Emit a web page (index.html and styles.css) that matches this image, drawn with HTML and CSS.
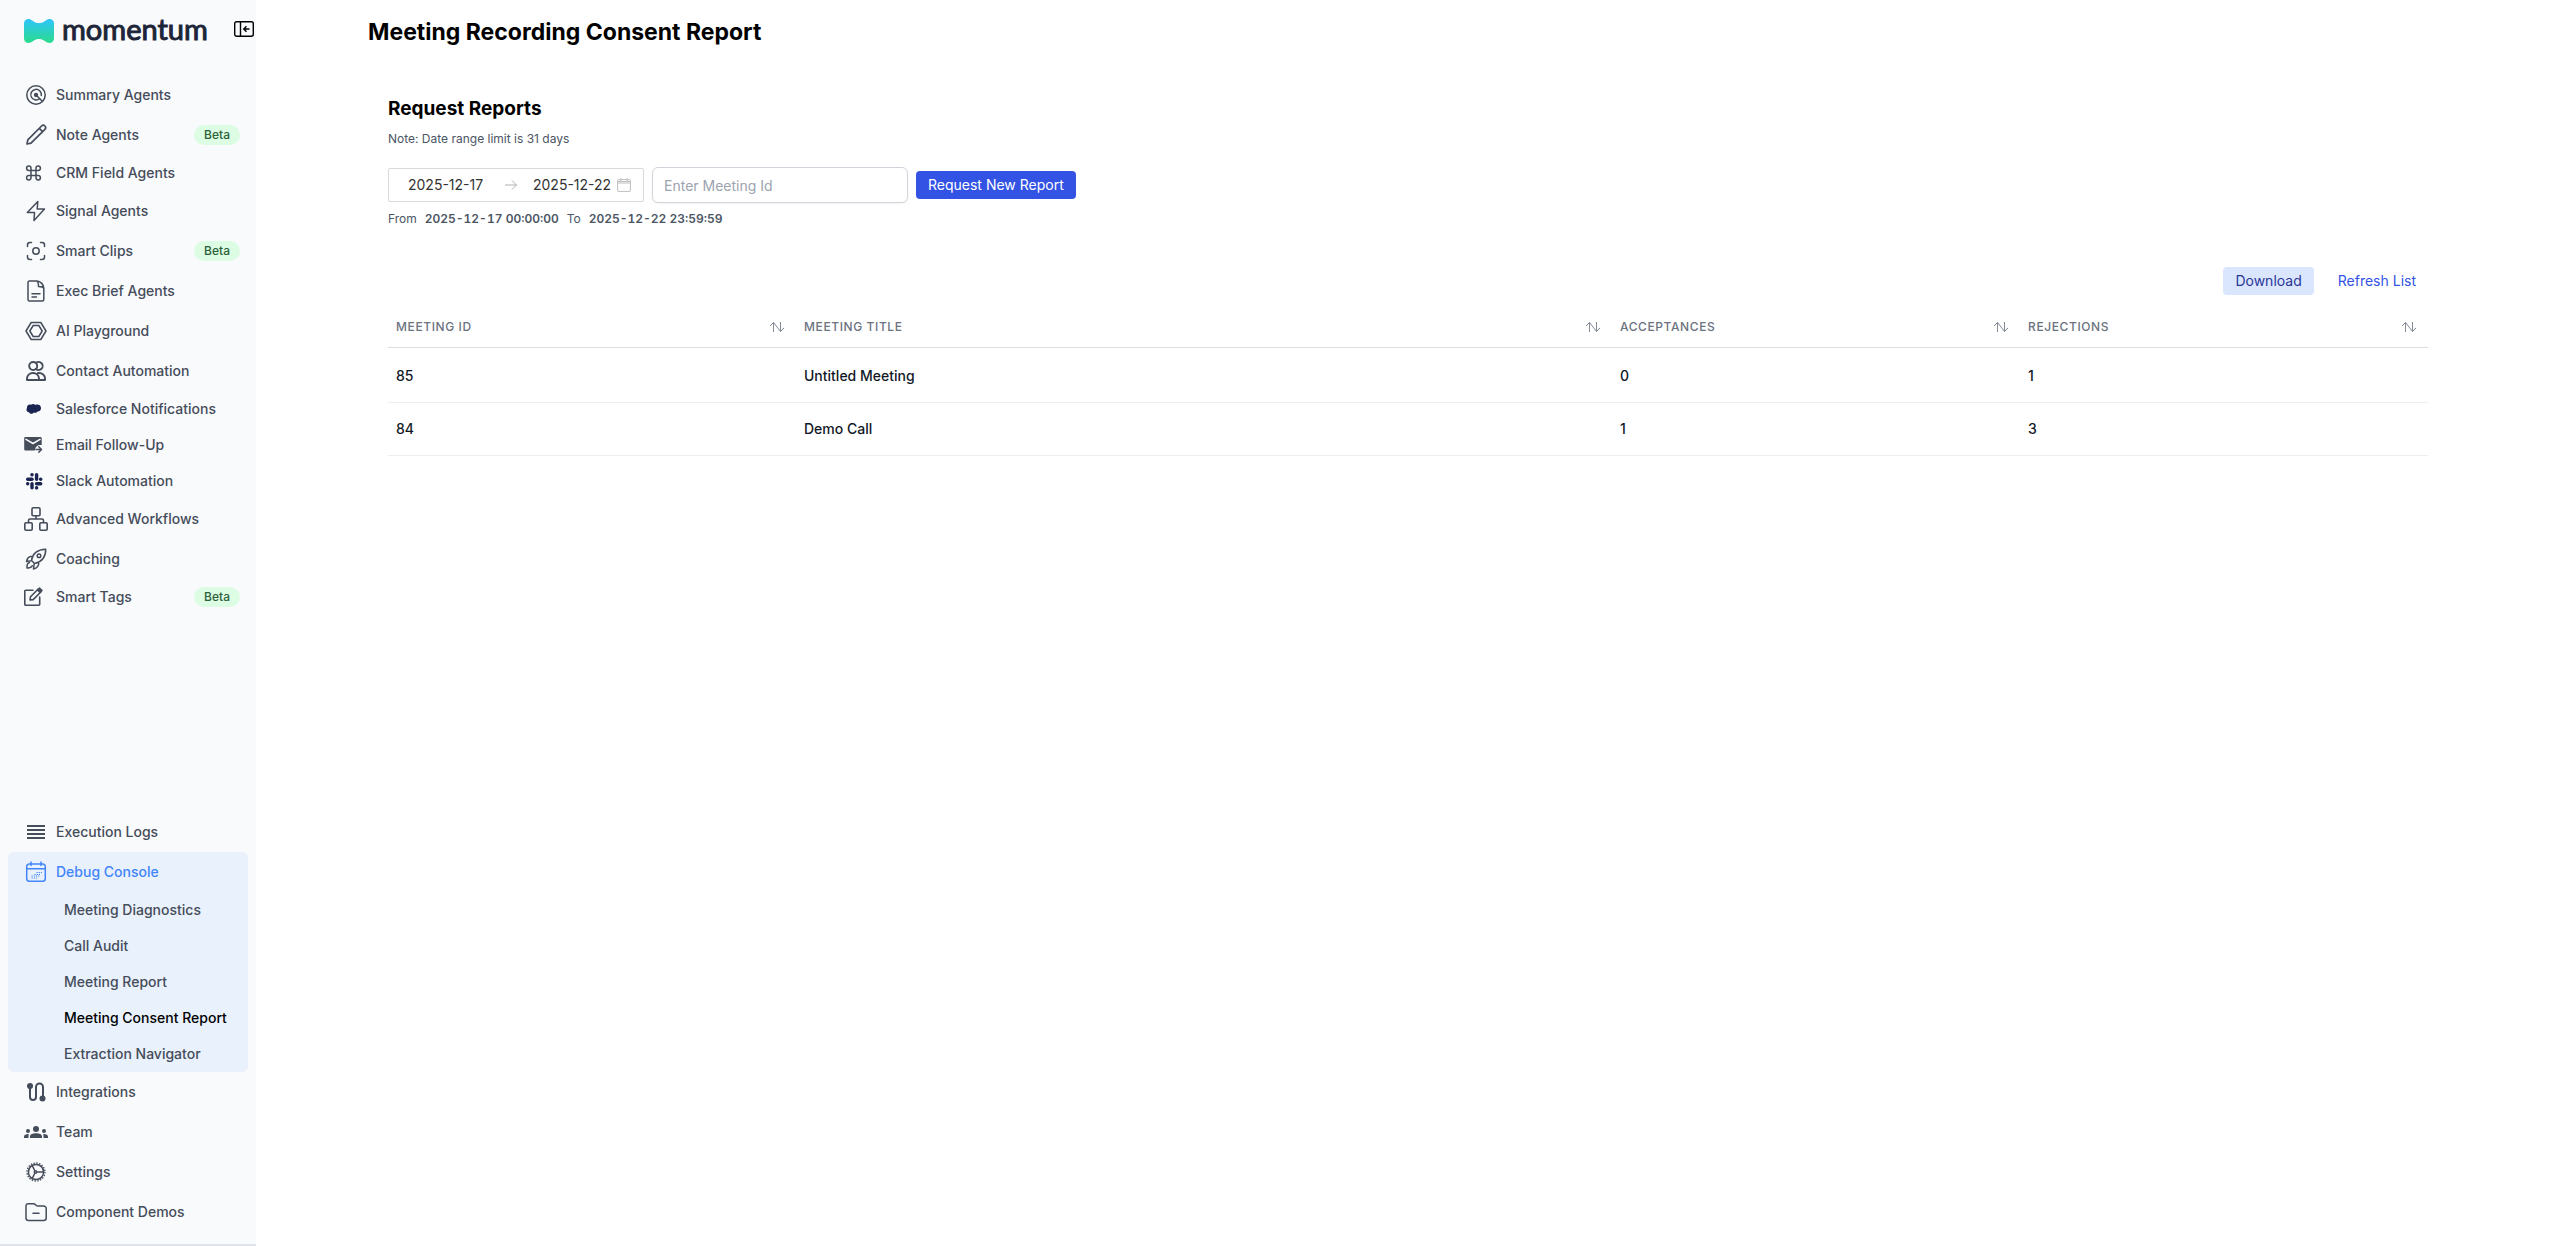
FILE: index.html
```html
<!DOCTYPE html>
<html lang="en">
<head>
	<meta charset="UTF-8">
	<title>Meeting Recording Consent Report</title>
	<link rel="stylesheet" href="styles.css">
</head>
<body>
	<div class="layout">
		<aside class="sidebar">
			<div class="sidebar-header">
				<a href="#" class="logo">
					<svg class="logo-mark" viewBox="0 0 30 24">
						<defs>
							<linearGradient id="logoFill" x1="0" y1="0" x2="0" y2="1">
								<stop offset="0" stop-color="#2ec5fb"/>
								<stop offset="1" stop-color="#2bdc8c"/>
							</linearGradient>
						</defs>
						<path fill="url(#logoFill)" d="M0 4.500C0 1 3.200-.8 6.500.4C9 1.300 10.500 4 15 4S21 1.300 23.500.4C26.800-.8 30 1 30 4.500V19.500C30 23 26.800 24.800 23.500 23.600C21 22.700 19.500 20 15 20S9 22.700 6.500 23.600C3.200 24.800 0 23 0 19.500Z"/>
					</svg>
					<span class="logo-text">momentum</span>
				</a>
				<button type="button" class="collapse-btn" aria-label="Collapse sidebar">
					<svg viewBox="0 0 20 16" fill="none" stroke="#000" stroke-width="1.4">
						<rect x=".7" y=".7" width="18.600" height="14.600" rx="2"/>
						<path d="M6.500 1v14M15.500 8H10M12.500 5.200L9.700 8l2.800 2.800"/>
					</svg>
				</button>
			</div>

			<nav class="nav">
				<a href="#" class="nav-link">
					<svg class="icon" viewBox="0 0 24 24"><circle cx="12" cy="12" r="9.200"/><path d="M15.500 15.700A5.300 5.300 0 1 1 17.300 12.500"/><circle cx="12" cy="12" r="1.400" class="solid"/><path d="M12 12l6.300 6.300" /></svg>
					Summary Agents
				</a>
				<a href="#" class="nav-link">
					<svg class="icon" viewBox="0 0 24 24"><path d="M3 21l.8-4.200L17.600 3a2.300 2.300 0 0 1 3.300 3.300L7 20.200zM15.300 5.300l3.300 3.300" stroke-width="1.700"/></svg>
					Note Agents
					<span class="badge">Beta</span>
				</a>
				<a href="#" class="nav-link">
					<svg class="icon icon-short" viewBox="0 0 24 20"><path d="M7 7.500V5.200A2.200 2.200 0 1 0 4.800 7.500H14.200A2.200 2.200 0 1 0 12 5.200V14.800A2.200 2.200 0 1 0 14.200 12.500H4.800A2.200 2.200 0 1 0 7 14.800Z"/></svg>
					CRM Field Agents
				</a>
				<a href="#" class="nav-link">
					<svg class="icon" viewBox="0 0 24 24"><path d="M13.800 2.500L3.300 13.500H10.500L10 21.500L20.500 10H13.200Z"/></svg>
					Signal Agents
				</a>
				<a href="#" class="nav-link">
					<svg class="icon" viewBox="0 0 24 24"><path d="M7.500 3.500H6A2.500 2.500 0 0 0 3.500 6V7.500M16.500 3.500H18A2.500 2.500 0 0 1 20.500 6V7.500M20.500 16.500V18A2.500 2.500 0 0 1 18 20.500H16.500M7.500 20.500H6A2.500 2.500 0 0 1 3.500 18V16.500"/><circle cx="12" cy="12" r="3.200"/></svg>
					Smart Clips
					<span class="badge">Beta</span>
				</a>
				<a href="#" class="nav-link">
					<svg class="icon" viewBox="0 0 24 24"><path d="M5.500 2H13C16.500 2 19.800 6 19.800 9V20.500A1.500 1.500 0 0 1 18.300 22H5.500A1.500 1.500 0 0 1 4 20.500V3.500A1.500 1.500 0 0 1 5.500 2ZM12.500 2C14.500 2.500 14.500 4.500 14.500 7.500C17.500 7.500 19.800 7.500 19.800 10M8 14.800H16M8 18H12.500"/></svg>
					Exec Brief Agents
				</a>
				<a href="#" class="nav-link">
					<svg class="icon" viewBox="0 0 24 24"><path d="M7.200 3.500H16.800L22 12L16.800 20.500H7.200L2 12Z"/><path d="M9.200 6.500H14.800L18.200 12L14.800 17.500H9.200L5.800 12Z"/></svg>
					AI Playground
				</a>
				<a href="#" class="nav-link">
					<svg class="icon" viewBox="0 0 24 24"><g stroke-width="1.900"><circle cx="9.200" cy="7" r="4"/><path d="M12 4A4 4 0 1 1 12 10M3 21V19.500C3 16.500 5.500 14 9 14S15 16.500 15 19.500V21ZM14 14C18.500 13.500 21 16.500 21 19.500V21H15"/></g></svg>
					Contact Automation
				</a>
				<a href="#" class="nav-link">
					<svg class="icon icon-short brand" viewBox="0 0 24 20"><path d="M3 9C2.600 6.500 5 5 7 5.800C8.300 4.600 10.300 4.700 11.400 6C13 5 17.200 5.600 17 9.300C17 11.800 15 12.500 13.500 12.400C12.600 13.800 11 14.200 9.800 13.500C8.500 15.500 5.800 15 5 13.200C2.500 13 2 10.500 3 9Z"/></svg>
					Salesforce Notifications
				</a>
				<a href="#" class="nav-link">
					<svg class="icon icon-short fill" viewBox="0 0 24 20"><path d="M1.500 2H16.500A1.200 1.200 0 0 1 17.700 3.200V10C14 9.500 11 11.500 11 15.500H1.500A1.300 1.300 0 0 1 .2 14.200V3.200A1.200 1.200 0 0 1 1.500 2Z"/><path class="cut" d="M2 4.300L9 8.500L16 4.300"/><path class="line" d="M12 14.500H17M14.800 11.800L17.500 14.500L14.800 17.200"/></svg>
					Email Follow-Up
				</a>
				<a href="#" class="nav-link">
					<svg class="icon icon-short brand" viewBox="0 0 24 20"><rect x="6.300" y="2" width="3.400" height="3.400" rx="1.600"/><rect x="2" y="6.500" width="7.700" height="3.400" rx="1.700"/><rect x="10.900" y="2" width="3.400" height="7.900" rx="1.700"/><rect x="15" y="6.500" width="3.400" height="3.400" rx="1.600"/><rect x="2" y="11" width="3.400" height="3.400" rx="1.600"/><rect x="6.300" y="11" width="3.400" height="7.500" rx="1.700"/><rect x="10.900" y="11" width="7.500" height="3.400" rx="1.700"/><rect x="10.900" y="15.100" width="3.400" height="3.400" rx="1.600"/></svg>
					Slack Automation
				</a>
				<a href="#" class="nav-link">
					<svg class="icon" viewBox="0 0 24 24"><g stroke-width="1.600"><rect x="8" y=".8" width="8" height="8" rx="1.200"/><rect x=".8" y="15.800" width="7.400" height="7.400" rx="1.200"/><rect x="15.800" y="15.800" width="7.400" height="7.400" rx="1.200"/><path d="M12 9V12M4.500 15.500V13.500A1.500 1.500 0 0 1 6 12H18A1.500 1.500 0 0 1 19.500 13.500V15.500"/></g></svg>
					Advanced Workflows
				</a>
				<a href="#" class="nav-link">
					<svg class="icon" viewBox="0 0 24 24"><path d="M7.500 13.500C8.500 7 13 2.500 21.700 2.200C21.800 11 17 15 10.500 16.500ZM9 9.500H6.500C4.500 10 3 12 2.500 14.500L7.300 13.800M14.600 15.200V17.500C14 19.500 12 21.500 9.500 22L10.200 16.800M5.500 15.500C3.800 16 2.800 18.500 3 21C5.500 21.200 7.500 20.300 8.300 18.700"/><circle cx="15" cy="8.800" r="1.800"/></svg>
					Coaching
				</a>
				<a href="#" class="nav-link">
					<svg class="icon icon-short" viewBox="0 0 24 20"><path d="M9 3.300H1.700A.9.9 0 0 0 .8 4.200V17.300A.9.9 0 0 0 1.700 18.200H14.800A.9.900 0 0 0 15.700 17.300V10M6 13L6.500 9.800L14 2.200L16.800 5L9.200 12.600Z" stroke-width="1.600"/><path class="solid" d="M13.500 3L15.500 1L18 3.500L16 5.500Z"/></svg>
					Smart Tags
					<span class="badge">Beta</span>
				</a>
			</nav>

			<nav class="nav nav-bottom">
				<a href="#" class="nav-link">
					<svg class="icon fill" viewBox="0 0 24 24"><path d="M3 5H21V7H3ZM3 9H21V11H3ZM3 13H21V15H3ZM3 17H21V19H3Z"/></svg>
					Execution Logs
				</a>
				<div class="nav-group">
					<a href="#" class="nav-link active">
						<svg class="icon" viewBox="0 0 24 24"><rect x="2.700" y="4" width="18.600" height="17.300" rx="2.800"/><path d="M2.700 8.700H21.300M7 2V5.500M17 2V5.500"/><path class="dots" d="M12.500 12.500H18M10.500 14.500H16M7.500 16H16M7.500 18H14"/></svg>
						Debug Console
					</a>
					<a href="#" class="sub-link">Meeting Diagnostics</a>
					<a href="#" class="sub-link">Call Audit</a>
					<a href="#" class="sub-link">Meeting Report</a>
					<a href="#" class="sub-link current">Meeting Consent Report</a>
					<a href="#" class="sub-link">Extraction Navigator</a>
				</div>
				<a href="#" class="nav-link">
					<svg class="icon" viewBox="0 0 24 24"><path d="M6 6V17A3 3 0 0 0 12 17V7A3.500 3.500 0 0 1 19 7V18" stroke-width="2"/><circle class="solid" cx="6" cy="6" r="2.300"/><circle class="solid" cx="18.500" cy="18.500" r="2.300"/></svg>
					Integrations
				</a>
				<a href="#" class="nav-link">
					<svg class="icon fill" viewBox="0 0 24 24"><circle cx="12" cy="9" r="3"/><circle cx="4" cy="11" r="2"/><circle cx="20" cy="11" r="2"/><path d="M6 18V16.400C6 14.500 8.700 13.300 12 13.300S18 14.500 18 16.400V18ZM0 18V16.500C0 15 1.800 14 4.900 14.100C4.600 14.700 4.500 15.400 4.500 16V18ZM24 18V16.500C24 15 22.200 14 19.100 14.100C19.400 14.700 19.500 15.400 19.500 16V18Z"/></svg>
					Team
				</a>
				<a href="#" class="nav-link">
					<svg class="icon" viewBox="0 0 24 24"><circle cx="12" cy="12" r="7.600"/><circle class="teeth" cx="12" cy="12" r="9"/><circle cx="11.500" cy="12" r="1.200"/><path d="M13.500 12H19.500M10.500 10.300L8.200 5.400M10.500 13.700L8.200 18.600"/></svg>
					Settings
				</a>
				<a href="#" class="nav-link">
					<svg class="icon" viewBox="0 0 24 24"><path d="M4 3.700H9.500C11.500 3.700 11.500 6 13.500 6H19.500A2.600 2.600 0 0 1 22.200 8.600V18A2.500 2.500 0 0 1 19.700 20.500H4.500A2.500 2.500 0 0 1 2 18V5.700A2 2 0 0 1 4 3.700ZM9 13.300H15"/></svg>
					Component Demos
				</a>
			</nav>
		</aside>

		<main class="content">
			<h1 class="page-title">Meeting Recording Consent Report</h1>

			<section class="report">
				<h2 class="section-title">Request Reports</h2>
				<p class="note">Note: Date range limit is 31 days</p>

				<form class="request-form">
					<div class="date-range">
						<input type="text" class="date-input" aria-label="Start date" value="2025-12-17">
						<svg class="range-arrow" viewBox="0 0 16 16"><path d="M2 8H13.500M9 3.500L13.500 8L9 12.500"/></svg>
						<input type="text" class="date-input date-end" aria-label="End date" value="2025-12-22">
						<svg class="range-calendar" viewBox="0 0 14 14"><rect x=".6" y="1.600" width="12.800" height="11.800" rx=".5"/><path d="M.6 5H13.400M3.800 0V3M10.200 0V3M1 3.500H13"/></svg>
					</div>
					<input type="text" class="meeting-input" aria-label="Meeting Id" placeholder="Enter Meeting Id">
					<button type="submit" class="btn btn-primary">Request New Report</button>
				</form>
				<p class="range-text">From <strong>2025-12-17 00:00:00</strong> To <strong>2025-12-22 23:59:59</strong></p>

				<div class="actions">
					<button type="button" class="btn btn-light">Download</button>
					<button type="button" class="btn btn-link">Refresh List</button>
				</div>

				<table class="table">
					<colgroup>
						<col class="col-small">
						<col class="col-large">
						<col class="col-small">
						<col class="col-small">
					</colgroup>
					<thead>
						<tr>
							<th><div class="th-inner">Meeting ID <button type="button" class="sort-btn" aria-label="Sort by meeting id"><svg viewBox="0 0 16 12"><path d="M4.500 11V1.500M1 5L4.500 1.500L11.500 10.500L15 7M11.500 10.500V1"/></svg></button></div></th>
							<th><div class="th-inner">Meeting Title <button type="button" class="sort-btn" aria-label="Sort by meeting title"><svg viewBox="0 0 16 12"><path d="M4.500 11V1.500M1 5L4.500 1.500L11.500 10.500L15 7M11.500 10.500V1"/></svg></button></div></th>
							<th><div class="th-inner">Acceptances <button type="button" class="sort-btn" aria-label="Sort by acceptances"><svg viewBox="0 0 16 12"><path d="M4.500 11V1.500M1 5L4.500 1.500L11.500 10.500L15 7M11.500 10.500V1"/></svg></button></div></th>
							<th><div class="th-inner">Rejections <button type="button" class="sort-btn" aria-label="Sort by rejections"><svg viewBox="0 0 16 12"><path d="M4.500 11V1.500M1 5L4.500 1.500L11.500 10.500L15 7M11.500 10.500V1"/></svg></button></div></th>
						</tr>
					</thead>
					<tbody>
						<tr>
							<td>85</td>
							<td>Untitled Meeting</td>
							<td>0</td>
							<td>1</td>
						</tr>
						<tr>
							<td>84</td>
							<td>Demo Call</td>
							<td>1</td>
							<td>3</td>
						</tr>
					</tbody>
				</table>
			</section>
		</main>
	</div>
</body>
</html>
```
FILE: styles.css
```css
* {
	margin: 0;
	padding: 0;
	box-sizing: border-box;
}
body {
	font-family: Inter, "Liberation Sans", sans-serif;
	font-size: 14px;
	line-height: 20px;
	color: #000;
	background-color: #fff;
}
a {
	text-decoration: none;
	color: inherit;
}
button,
input {
	font: inherit;
}
button {
	border: 0;
	background: none;
	cursor: pointer;
}
svg {
	display: block;
	flex: none;
}
.layout {
	display: flex;
	min-height: 100vh;
}

/* sidebar */
.sidebar {
	display: flex;
	flex-direction: column;
	flex: none;
	width: 256px;
	padding-bottom: 12px;
	background-color: #f9fafc;
	border-bottom: 2px solid #e0e3e9;
}
.sidebar-header {
	display: flex;
	align-items: center;
	justify-content: space-between;
	padding: 11px 2px 24px 24px;
}
.logo {
	display: flex;
	align-items: center;
	gap: 8px;
	height: 40px;
}
.logo-mark {
	width: 30px;
	height: 24px;
}
.logo-text {
	font-family: Lato, sans-serif;
	font-size: 29px;
	line-height: 32px;
	padding-bottom: 4px;
	color: #1d2438;
	-webkit-text-stroke: 1px #1d2438;
}
.collapse-btn {
	padding-bottom: 4px;
}
.collapse-btn svg {
	width: 20px;
	height: 16px;
}
.nav {
	display: flex;
	flex-direction: column;
}
.nav-bottom {
	margin-top: auto;
}
.nav-link {
	display: flex;
	align-items: center;
	gap: 8px;
	padding: 8px 16px 8px 24px;
	font-weight: 500;
	color: #454c5a;
}
.icon {
	width: 24px;
	height: 24px;
	fill: none;
	stroke: currentColor;
	stroke-width: 1.5;
	stroke-linecap: round;
	stroke-linejoin: round;
}
.icon-short {
	height: 20px;
}
.icon .solid {
	fill: currentColor;
}
.icon .teeth {
	stroke-width: 1.3;
	stroke-linecap: butt;
	stroke-dasharray: 1.5 1.327;
}
.icon .dots {
	stroke-width: 1.2;
	stroke-linecap: butt;
	stroke-dasharray: 1.2 1;
}
.icon.fill {
	fill: currentColor;
	stroke: none;
}
.icon.fill .line {
	fill: none;
	stroke: currentColor;
}
.icon.fill .cut {
	fill: none;
	stroke: #f9fafc;
}
.icon.brand {
	fill: #1b2350;
	stroke: none;
}
.badge {
	margin-left: auto;
	padding: 0 10px;
	border-radius: 10px;
	font-size: 12px;
	background-color: #dcfce3;
	color: #2c6139;
}
.nav-group {
	display: flex;
	flex-direction: column;
	margin: 0 8px;
	border-radius: 6px;
	background-color: #e9f1fc;
}
.nav-group .nav-link {
	padding-left: 16px;
}
.nav-link.active {
	color: #4285f9;
}
.sub-link {
	padding: 8px 16px 8px 56px;
	font-weight: 500;
	color: #454c5a;
}
.sub-link.current {
	color: #000;
}

/* content */
.content {
	flex: 1;
	min-width: 0;
	padding: 16px 112px;
}
.page-title {
	font-size: 23px;
	line-height: 32px;
	font-weight: 700;
}
.report {
	padding: 47px 20px 20px;
}
.section-title {
	font-size: 19px;
	line-height: 28px;
	font-weight: 700;
}
.note,
.range-text {
	font-size: 12px;
	line-height: 16px;
	color: #4b5563;
}
.note {
	margin-top: 8px;
}
.request-form {
	display: flex;
	align-items: center;
	gap: 8px;
	margin-top: 20px;
}
.date-range {
	display: flex;
	align-items: center;
	width: 256px;
	height: 34px;
	padding: 0 12px 0 19px;
	border: 1px solid #d9d9d9;
	border-radius: 2px;
	color: #333;
}
.date-input {
	flex: 1;
	min-width: 0;
	border: 0;
	outline: none;
	color: inherit;
	background: none;
}
.date-end {
	flex: none;
	width: 84px;
}
.range-arrow {
	width: 16px;
	height: 16px;
	margin-right: 14px;
	fill: none;
	stroke: #b3b3b3;
}
.range-calendar {
	width: 14px;
	height: 14px;
	fill: none;
	stroke: #bfbfbf;
}
.meeting-input {
	width: 256px;
	height: 36px;
	padding: 0 11px;
	border: 1px solid #d1d5db;
	border-radius: 6px;
	outline: none;
	box-shadow: 0 1px 2px rgba(0, 0, 0, 0.05);
}
.meeting-input::placeholder {
	color: #9ca3af;
}
.btn {
	padding: 4px 12px;
	border-radius: 4px;
}
.btn-primary {
	background-color: #3353e4;
	color: #fff;
}
.btn-light {
	background-color: #dae6fe;
	color: #2a3698;
}
.btn-link {
	color: #3353e4;
}
.range-text {
	display: flex;
	gap: 8px;
	margin-top: 8px;
}
.range-text strong {
	font-weight: 600;
	font-variant-numeric: tabular-nums;
}
.actions {
	display: flex;
	justify-content: flex-end;
	gap: 12px;
	margin-top: 40px;
}

/* table */
.table {
	width: 100%;
	margin-top: 9px;
	table-layout: fixed;
	border-spacing: 0;
}
.col-small {
	width: 20%;
}
.col-large {
	width: 40%;
}
.table th {
	padding: 15px 8px 12px;
	border-bottom: 1px solid #dcdde0;
	font-size: 12px;
	line-height: 16px;
	font-weight: 500;
	letter-spacing: 0.05em;
	text-align: left;
	text-transform: uppercase;
	color: #6b7280;
}
.th-inner {
	display: flex;
	align-items: center;
	justify-content: space-between;
}
.sort-btn {
	margin-right: 3px;
}
.sort-btn svg {
	width: 16px;
	height: 12px;
	fill: none;
	stroke: #858b98;
}
.table td {
	padding: 16px 8px;
	border-bottom: 1px solid #eeeff1;
	font-weight: 500;
	color: #111827;
}
.table tbody tr:first-child td {
	padding-top: 18px;
}
```
